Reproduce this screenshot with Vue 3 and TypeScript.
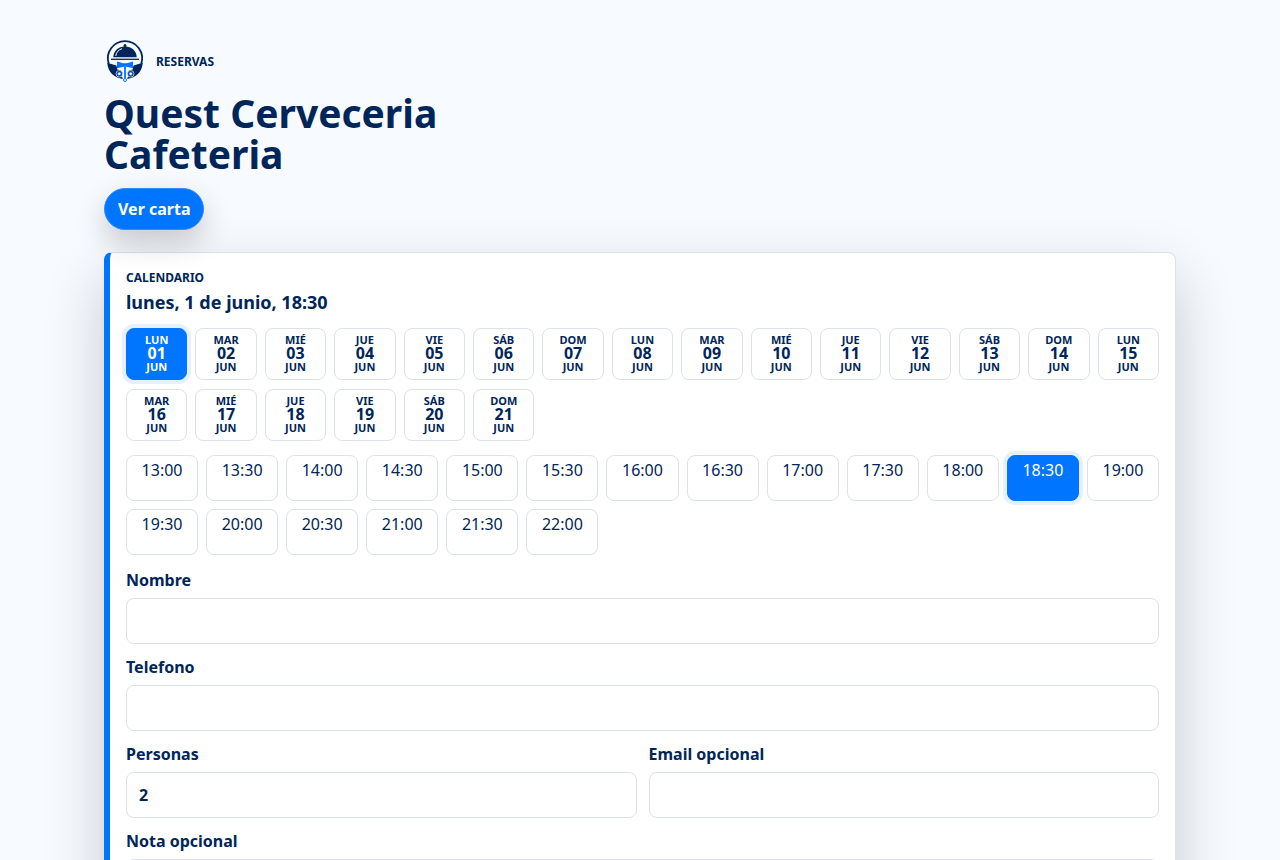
<script setup lang="ts">
import { ref, computed } from 'vue'

const weekdays: string[] = ['lun', 'mar', 'mié', 'jue', 'vie', 'sáb', 'dom']
const fullWeekdays: string[] = ['lunes', 'martes', 'miércoles', 'jueves', 'viernes', 'sábado', 'domingo']
const days: number[] = Array.from({ length: 21 }, (_, i) => i + 1)
const times: string[] = Array.from({ length: 19 }, (_, i) => {
  const minutes = 13 * 60 + i * 30
  return `${Math.floor(minutes / 60)}:${minutes % 60 ? '30' : '00'}`
})

const selectedDay = ref<number>(1)
const selectedTime = ref<string>('18:30')
const people = ref<string>('2')

const summary = computed<string>(
  () => `${fullWeekdays[(selectedDay.value - 1) % 7]}, ${selectedDay.value} de junio, ${selectedTime.value}`,
)
</script>

<template>
  <main class="page">
    <header class="hero">
      <div class="brand">
        <svg class="logo" viewBox="0 0 42 44" aria-hidden="true">
          <path d="M4.8 23.6A17.1 17.1 0 1 1 37.2 23.6" fill="none" stroke="#002659" stroke-width="1.8" />
          <path d="M9.3 17.2C9.3 11 14.3 6.4 21 6.4S32.7 11 32.7 17.2Z" fill="#002659" />
          <circle cx="21" cy="5.6" r="1.5" fill="#002659" />
          <path d="M11.8 15.6C12.3 12.2 14.5 9.8 17.6 8.8" fill="none" stroke="#f7faff" stroke-width="1" stroke-linecap="round" />
          <path d="M7 19.3H35" stroke="#002659" stroke-width="1.3" />
          <path d="M3.2 22.8 12.5 25.6 13.3 29.5 18.7 31V38.9C10.3 37.9 3.8 32 3.2 22.8Z" fill="#002659" />
          <path d="M38.8 22.8 29.5 25.6 28.7 29.5 23.3 31V38.9C31.7 37.9 38.2 32 38.8 22.8Z" fill="#002659" />
          <path d="M14 28.2H28L24.2 31V37.5H17.8V31Z" fill="#f7faff" />
          <circle cx="15.3" cy="33.8" r="3.3" fill="#002659" stroke="#f7faff" stroke-width=".7" />
          <circle cx="26.7" cy="33.8" r="3.3" fill="#002659" stroke="#f7faff" stroke-width=".7" />
          <circle cx="15.3" cy="33.8" r="1.8" fill="#fff" stroke="#0075ff" stroke-width="1" />
          <circle cx="26.7" cy="33.8" r="1.8" fill="#fff" stroke="#0075ff" stroke-width="1" />
          <path d="M13 21.5 19.2 23.2H22.8L29 21.5V28.2L22.8 26.8H19.2L13 28.2Z" fill="#0075ff" />
          <path d="M21 26.5V38.5" stroke="#0075ff" stroke-width="1.8" />
          <circle cx="21" cy="40" r="1.5" fill="#fff" stroke="#0075ff" stroke-width="1" />
        </svg>
        <span class="eyebrow">RESERVAS</span>
      </div>
      <h1>Quest Cerveceria Cafeteria</h1>
      <a class="menu-link" href="#carta">Ver carta</a>
    </header>

    <form class="panel" @submit.prevent>
      <section class="calendar">
        <div class="heading">
          <span class="eyebrow">CALENDARIO</span>
          <h2>{{ summary }}</h2>
        </div>

        <div class="days" role="group" aria-label="Día">
          <button
            v-for="day in days"
            :key="day"
            type="button"
            class="option day"
            :class="{ selected: day === selectedDay }"
            :aria-pressed="day === selectedDay"
            @click="selectedDay = day"
          >
            <span class="small">{{ weekdays[(day - 1) % 7] }}</span>
            <strong>{{ String(day).padStart(2, '0') }}</strong>
            <span class="small">jun</span>
          </button>
        </div>

        <div class="times" role="group" aria-label="Hora">
          <button
            v-for="time in times"
            :key="time"
            type="button"
            class="option time"
            :class="{ selected: time === selectedTime }"
            :aria-pressed="time === selectedTime"
            @click="selectedTime = time"
          >{{ time }}</button>
        </div>
      </section>

      <section class="details">
        <div class="field">
          <label for="name">Nombre</label>
          <input id="name" type="text" autocomplete="name" />
        </div>
        <div class="field">
          <label for="phone">Telefono</label>
          <input id="phone" type="tel" autocomplete="tel" />
        </div>
        <div class="pair">
          <div class="field">
            <label for="people">Personas</label>
            <input id="people" v-model="people" type="text" inputmode="numeric" />
          </div>
          <div class="field">
            <label for="email">Email opcional</label>
            <input id="email" type="email" autocomplete="email" />
          </div>
        </div>
        <div class="field">
          <label for="note">Nota opcional</label>
          <textarea id="note" rows="3"></textarea>
        </div>
      </section>
    </form>
  </main>
</template>

<style>
body {
  background: #f7faff;
}
</style>

<style scoped>
.page {
  box-sizing: border-box;
  max-width: 1120px;
  margin: 0 auto;
  padding: 40px 24px;
  display: flex;
  flex-direction: column;
  gap: 22px;
  color: #002659;
  font-family: "Noto Sans", sans-serif;
  font-size: 16px;
}
.hero {
  position: relative;
  z-index: 1;
  display: flex;
  flex-direction: column;
  align-items: flex-start;
}
.brand {
  display: flex;
  align-items: center;
  gap: 10px;
}
.logo {
  width: 42px;
  height: 44px;
}
.eyebrow {
  font-size: 12px;
  line-height: 18px;
  font-weight: 700;
}
h1 {
  max-width: 400px;
  margin: 8px 0 14px;
  font-size: 39px;
  line-height: 41px;
  font-weight: 700;
}
.menu-link {
  box-sizing: border-box;
  height: 42px;
  padding: 0 13px;
  display: flex;
  align-items: center;
  border: 1px solid #2e8eff;
  border-radius: 21px;
  background: #0075ff;
  box-shadow: 0 12px 30px rgba(0, 0, 0, 0.2);
  color: #fff;
  font-weight: 700;
  text-decoration: none;
}
.panel {
  padding: 16px;
  display: grid;
  gap: 15px;
  border: 1px solid #dce1ea;
  border-left: 6px solid #0075ff;
  border-radius: 8px;
  background: #fff;
  box-shadow: 0 24px 60px rgba(0, 0, 0, 0.2);
}
.calendar {
  display: grid;
  gap: 14px;
}
.details {
  display: grid;
  gap: 13px;
}
.heading {
  display: grid;
  gap: 3px;
}
h2 {
  margin: 0;
  font-size: 18px;
  line-height: 24px;
  font-weight: 700;
}
.days,
.times {
  display: grid;
  gap: 8px;
}
.days {
  grid-template-columns: repeat(auto-fill, minmax(58px, 1fr));
  row-gap: 9px;
}
.times {
  grid-template-columns: repeat(auto-fill, minmax(72px, 1fr));
}
.option {
  box-sizing: border-box;
  border: 1px solid #dce1ea;
  border-radius: 8px;
  background: #fff;
  color: #002659;
  font-family: inherit;
  font-size: 16px;
  cursor: pointer;
}
.option.selected {
  border-color: #0075ff;
  background: #0075ff;
  box-shadow: 0 0 0 4px #e5f1ff;
  color: #fff;
}
.day {
  min-height: 52px;
  padding: 4px 4px 5px;
  display: flex;
  flex-direction: column;
  align-items: center;
  justify-content: center;
}
.day strong {
  line-height: 17px;
  font-weight: 700;
}
.small {
  font-size: 11px;
  line-height: 10px;
  font-weight: 700;
  text-transform: uppercase;
}
.time {
  min-height: 46px;
  padding: 3px 8px;
  display: flex;
  align-items: flex-start;
  justify-content: center;
  line-height: 22px;
}
.field {
  display: grid;
  gap: 7px;
}
.pair {
  display: grid;
  grid-template-columns: 1fr 1fr;
  gap: 12px;
}
label {
  line-height: 21px;
  font-weight: 700;
}
input,
textarea {
  box-sizing: border-box;
  width: 100%;
  min-width: 0;
  min-height: 46px;
  padding: 0 12px;
  border: 1px solid #dce1ea;
  border-radius: 8px;
  background: #fff;
  color: #002659;
  font-family: inherit;
  font-size: 16px;
  font-weight: 700;
}
textarea {
  padding: 10px 12px;
  resize: vertical;
}
</style>
